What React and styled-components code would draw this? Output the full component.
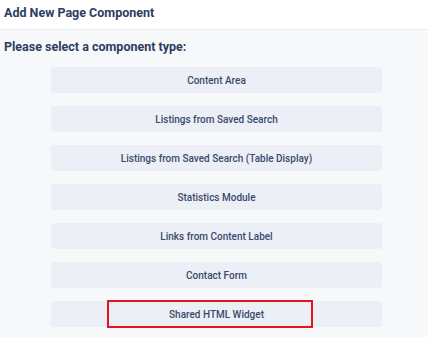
import styled, { createGlobalStyle } from "styled-components";

const Global = createGlobalStyle`
  html, body {
    margin: 0;
    padding: 0;
    background: #f7f8fa;
    font-family: Roboto, "Noto Sans", sans-serif;
  }
`;

const Page = styled.div`
  width: 428px;
  height: 337px;
  overflow: hidden;
  background: #f7f8fa;
  color: #2d3d62;
`;

const Header = styled.div`
  height: 30px;
  box-sizing: border-box;
  background: #fff;
  border-bottom: 1px solid #e9edf3;
  padding: 2px 0 0 4px;
  font-size: 12.5px;
  font-weight: 700;
  line-height: 22px;
`;

const Prompt = styled.h2`
  margin: 0;
  padding: 7px 0 0 4px;
  font-size: 12.5px;
  font-weight: 700;
  line-height: 20px;
`;

const List = styled.div`
  display: flex;
  flex-direction: column;
  gap: 13px;
  padding: 10px 0 0 51px;
  width: 331px;
`;

const Option = styled.div`
  position: relative;
  height: 26px;
  border-radius: 3px;
  background: #eceff5;
  display: flex;
  align-items: center;
  justify-content: center;
  font-size: 10px;
  font-weight: 500;
  color: #3b4a6d;
`;

const Highlight = styled.div`
  position: absolute;
  left: 56px;
  top: -1px;
  width: 206px;
  height: 28px;
  box-sizing: border-box;
  border: 2px solid #e3141e;
`;

const options = [
  "Content Area",
  "Listings from Saved Search",
  "Listings from Saved Search (Table Display)",
  "Statistics Module",
  "Links from Content Label",
  "Contact Form",
  "Shared HTML Widget",
];

export default function App() {
  return (
    <Page>
      <Global />
      <Header>Add New Page Component</Header>
      <Prompt>Please select a component type:</Prompt>
      <List>
        {options.map((o, i) => (
          <Option key={o}>
            {o}
            {i === options.length - 1 && <Highlight />}
          </Option>
        ))}
      </List>
    </Page>
  );
}
